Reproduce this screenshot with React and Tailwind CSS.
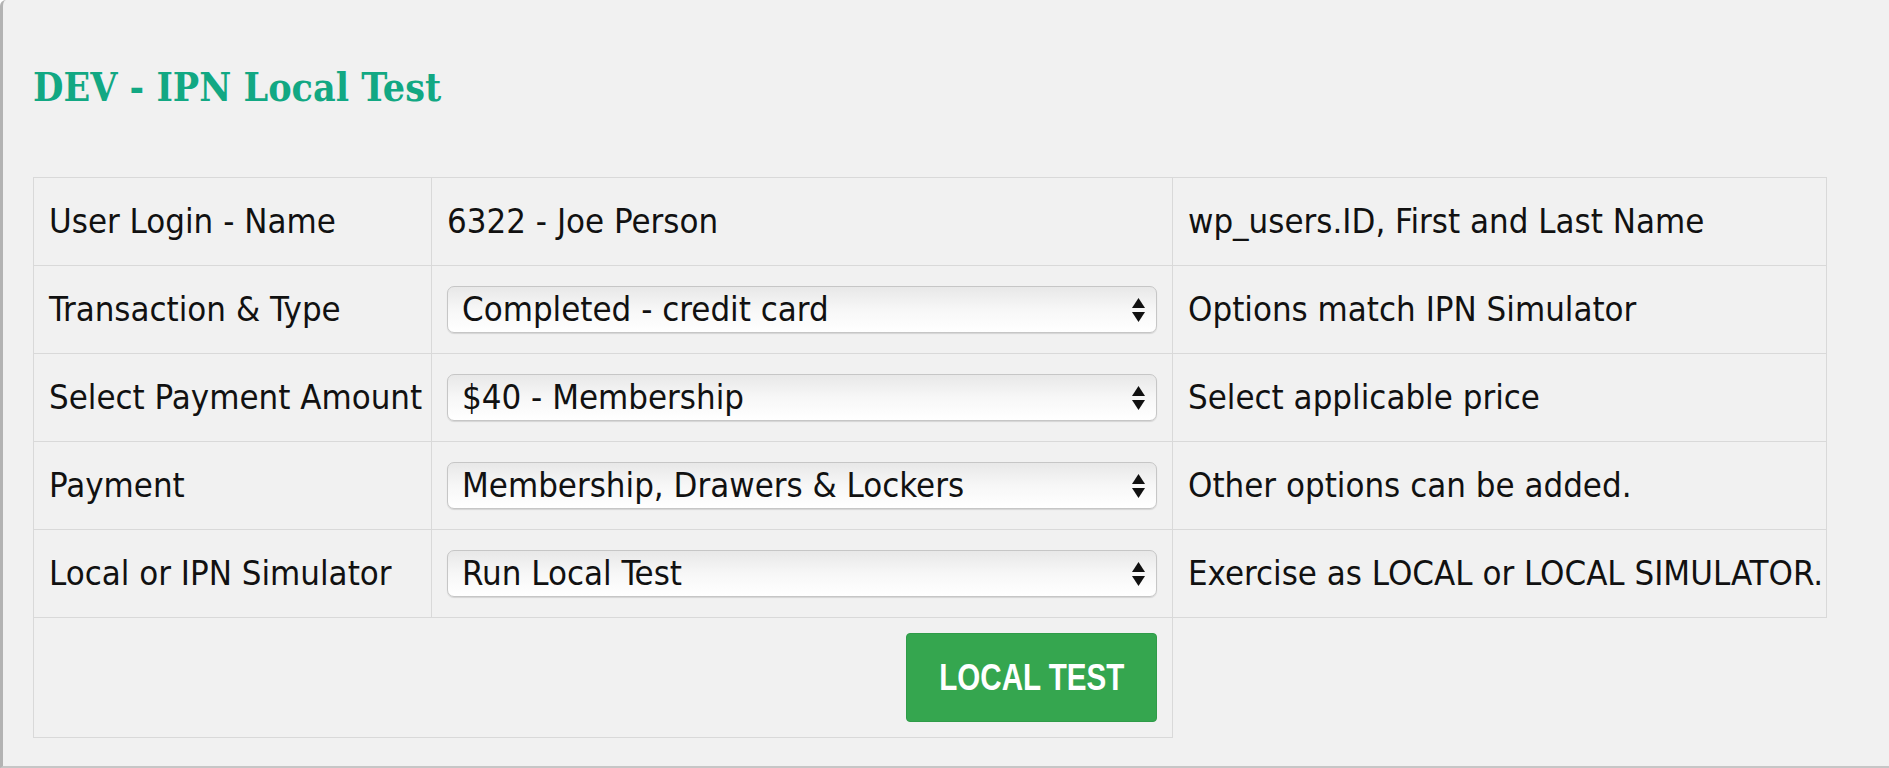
import React from 'react';

const rows = [
    { label: 'User Login - Name', value: '6322 - Joe Person', note: 'wp_users.ID, First and Last Name' },
    { label: 'Transaction & Type', select: 'Completed - credit card', note: 'Options match IPN Simulator' },
    { label: 'Select Payment Amount', select: '$40 - Membership', note: 'Select applicable price' },
    { label: 'Payment', select: 'Membership, Drawers & Lockers', note: 'Other options can be added.' },
    { label: 'Local or IPN Simulator', select: 'Run Local Test', note: 'Exercise as LOCAL or LOCAL SIMULATOR.' },
];

function FakeSelect({ value }) {
    return (
        <div className="flex h-[47px] w-full items-center justify-between rounded-[7px] border border-[#c6c6c6] bg-gradient-to-b from-[#e8e8e8] via-[#f7f7f7] to-white pl-[14px] pr-[10px] shadow-[0_1px_1px_rgba(0,0,0,0.12)]">
            <span className="whitespace-nowrap">{value}</span>
            <svg width="15" height="26" viewBox="0 0 15 26" className="shrink-0">
                <path d="M7.5 1 L14 11 L1 11 Z" fill="#111" />
                <path d="M7.5 25 L14 15 L1 15 Z" fill="#111" />
            </svg>
        </div>
    );
}

export default function App() {
    return (
        <div className="h-[768px] overflow-hidden bg-[#f1f1f1] border-l-[3px] border-b-2 border-l-[#b3b3b3] border-b-[#c6c6c6] rounded-tl-[6px] font-['DejaVu_Sans_Condensed','DejaVu_Sans',sans-serif] text-[34.5px] text-[#111]">
            <div className="pl-[30px] pt-[67px]">
                <h1 className="h-[40px] leading-[40px] font-['DejaVu_Serif_Condensed','DejaVu_Serif',serif] text-[39px] font-bold text-[#12a883]">
                    DEV - IPN Local Test
                </h1>

                <table className="mt-[70px] table-fixed border-collapse w-[1793px]">
                    <colgroup>
                        <col className="w-[398px]" />
                        <col className="w-[741px]" />
                        <col className="w-[654px]" />
                    </colgroup>
                    <tbody>
                        {rows.map((r) => (
                            <tr key={r.label} className="h-[88px]">
                                <td className="border border-[#d9d9d9] px-[15px] whitespace-nowrap">{r.label}</td>
                                <td className="border border-[#d9d9d9] px-[15px] whitespace-nowrap">
                                    {r.select ? <FakeSelect value={r.select} /> : r.value}
                                </td>
                                <td className="border border-[#d9d9d9] px-[15px] whitespace-nowrap">{r.note}</td>
                            </tr>
                        ))}
                        <tr className="h-[120px]">
                            <td colSpan={2} className="border border-[#d9d9d9] px-[15px] text-right">
                                <button className="inline-flex h-[89px] w-[251px] items-center justify-center rounded-[4px] border border-[#2f9c49] bg-[#35a64f] font-['Liberation_Sans',sans-serif] text-[37px] font-bold text-white">
                                    <span className="inline-block scale-x-[0.8] whitespace-nowrap">LOCAL TEST</span>
                                </button>
                            </td>
                        </tr>
                    </tbody>
                </table>
            </div>
        </div>
    );
}
